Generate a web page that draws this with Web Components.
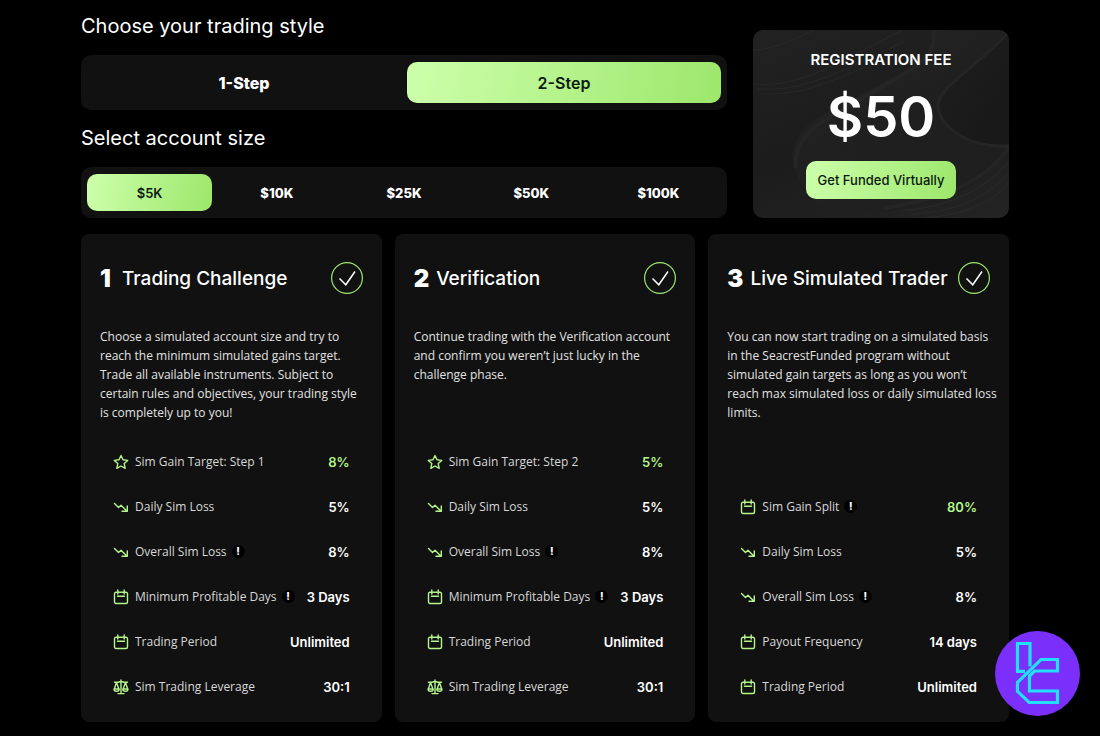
<!DOCTYPE html>
<html lang="en">
<head>
<meta charset="utf-8">
<meta name="viewport" content="width=device-width, initial-scale=1">
<title>Choose your trading style</title>
<style>
  body {
    margin: 0;
    background: #000;
    color: #fff;
    font-family: Inter, "Liberation Sans", sans-serif;
    --text-font: "Open Sans", "Liberation Sans", sans-serif;
    --panel: #111;
    --green: #b4f58c;
    --green-fill: linear-gradient(100deg, #cdffab, #9de76c);
  }
</style>
</head>
<body>
<funding-page></funding-page>

<script>
const ICONS = {
  star: '<path d="M8 1.5 10 5.8 14.700 6.400 11.200 9.600 12.200 14.300 8 12 3.800 14.300 4.800 9.600 1.300 6.400 6 5.800Z"/>',
  loss: '<path d="M1.500 4.500 5.500 8.500 8 6.200 13.800 12M14.300 7V12.300H9"/>',
  calendar: '<path d="M3 3.200H13A1.500 1.500 0 0 1 14.500 4.700V13A1.500 1.500 0 0 1 13 14.500H3A1.500 1.500 0 0 1 1.500 13V4.700A1.500 1.500 0 0 1 3 3.200ZM4.800 1V5M11.200 1V5M4.500 7.300H11.500"/>',
  scales: '<path d="M8 1V14.500M5 14.600H11M1.500 3.200H5L8 2.500 11 3.200H14.500M3.500 3.500 1.300 10M3.500 3.500 5.900 10M12.500 3.500 10.100 10M12.500 3.500 14.700 10M1 10H6.200C6.200 13 1 13 1 10ZM9.800 10H15C15 13 9.800 13 9.800 10Z"/>'
};

class OptionBar extends HTMLElement {
  constructor() {
    super();
    this.shadowDOM = this.attachShadow({mode: 'open'});
  }

  connectedCallback() {
    this.render();
  }

  render() {
    const options = this.getAttribute('options').split(',');
    const active = this.getAttribute('active');
    this.shadowDOM.innerHTML = `
    <style>
    :host {
      display: block;
      --gap: 2px;
      --height: 37px;
      --size: 13px;
    }
    :host([large]) {
      --gap: 6px;
      --height: 41px;
      --size: 16px;
    }
    .bar {
      display: flex;
      gap: var(--gap);
      padding: 7px 6px;
      border-radius: 10px;
      background: var(--panel);
    }
    button {
      flex: 1 1 0;
      height: var(--height);
      padding: 0;
      border: 0;
      border-radius: 10px;
      background: transparent;
      color: #fff;
      font: 800 var(--size) Inter, "Liberation Sans", sans-serif;
      cursor: pointer;
    }
    button[aria-pressed="true"] {
      background: var(--green-fill);
      color: #0b1a10;
      font-weight: 600;
    }
    </style>
    <div class="bar" role="group" aria-label="${this.getAttribute('label')}">
      ${options.map(o => `<button type="button" aria-pressed="${o === active}">${o}</button>`).join('')}
    </div>`;

    this.shadowDOM.querySelectorAll('button').forEach(button => {
      button.addEventListener('click', () => {
        this.setAttribute('active', button.textContent);
        this.render();
      });
    });
  }
}
customElements.define('option-bar', OptionBar);

class FeeCard extends HTMLElement {
  constructor() {
    super();
    this.shadowDOM = this.attachShadow({mode: 'open'});
  }

  connectedCallback() {
    this.shadowDOM.innerHTML = `
    <style>
    :host {
      display: grid;
      overflow: hidden;
      border-radius: 10px;
      background: linear-gradient(160deg, #222, #1c1c1c 50%, #242424);
    }
    .waves, .content {
      grid-area: 1 / 1;
    }
    .waves {
      width: 100%;
      height: 100%;
      min-height: 0;
    }
    .content {
      display: flex;
      flex-direction: column;
      align-items: center;
      padding: 20px 20px 19px;
      z-index: 1;
    }
    h2 {
      margin: 0;
      font-size: 15px;
      line-height: 20px;
      font-weight: 600;
    }
    .price {
      margin: 12px 0 9px;
      font-size: 56px;
      line-height: 70px;
      font-weight: 600;
    }
    button {
      width: 150px;
      height: 38px;
      padding: 0;
      border: 0;
      border-radius: 10px;
      background: var(--green-fill);
      color: #0b1a10;
      font: 500 13px Inter, "Liberation Sans", sans-serif;
      cursor: pointer;
    }
    </style>
    <svg class="waves" viewBox="0 0 256 188" preserveAspectRatio="none" aria-hidden="true">
      <defs>
        <linearGradient id="fold" x1="0" y1="0" x2="1" y2="1">
          <stop offset="0" stop-color="#2a2a2a"/>
          <stop offset="1" stop-color="#1a1a1a"/>
        </linearGradient>
        <linearGradient id="hollow" x1="0" y1="0" x2="1" y2="1">
          <stop offset="0" stop-color="#1d1d1d"/>
          <stop offset="1" stop-color="#141414"/>
        </linearGradient>
      </defs>
      <path d="M40 120C45 92 80 80 120 58S185 30 180 0H256V120C215 180 130 188 75 178C50 165 38 140 40 120Z" fill="url(#fold)" opacity=".5"/>
      <path d="M256 0C230 30 182 58 184 76C188 100 215 118 256 114Z" fill="url(#hollow)" opacity=".6"/>
      <g fill="none" stroke="#2e2e2e">
        <path d="M42 138C42 98 80 86 120 62S185 30 180 0" stroke-width="4" opacity=".4"/>
        <path d="M256 2C225 36 184 58 185 76C188 98 215 118 256 116" stroke-width="3" opacity=".5"/>
        <path d="M256 116C236 150 190 170 130 178" stroke-width="4" opacity=".4"/>
        <path d="M0 54C50 58 80 34 150 0M4 59C54 62 90 40 150 12M8 64C50 66 80 50 110 38M0 20C20 20 50 6 60 0" opacity=".6"/>
        <path d="M150 180C200 178 235 155 256 132M158 184C210 182 240 162 256 142M170 188C220 184 244 168 256 152" opacity=".7"/>
      </g>
    </svg>
    <div class="content">
      <h2><slot name="title"></slot></h2>
      <div class="price"><slot name="price"></slot></div>
      <button type="button"><slot name="action"></slot></button>
    </div>`;
  }
}
customElements.define('fee-card', FeeCard);

class RuleRow extends HTMLElement {
  constructor() {
    super();
    this.shadowDOM = this.attachShadow({mode: 'open'});
  }

  connectedCallback() {
    const info = this.hasAttribute('info')
      ? '<button type="button" aria-label="More information">!</button>' : '';
    this.shadowDOM.innerHTML = `
    <style>
    :host {
      display: flex;
      align-items: center;
      height: 45px;
      white-space: nowrap;
    }
    svg {
      flex: none;
      width: 16px;
      height: 16px;
      margin-right: 6px;
      fill: none;
      stroke: var(--green);
      stroke-width: 1.4;
      stroke-linejoin: round;
      stroke-linecap: round;
    }
    .label {
      color: #d8d8d8;
      font-family: var(--text-font);
      font-size: 12px;
      font-weight: 500;
    }
    .value {
      margin-left: auto;
      font-size: 13px;
      font-weight: 600;
    }
    :host([highlight]) .value {
      color: var(--green);
    }
    button {
      width: 13px;
      height: 13px;
      margin-left: 5px;
      padding: 0;
      border: 0;
      border-radius: 50%;
      background: #000;
      color: #fff;
      font: 800 10px/13px Inter, "Liberation Sans", sans-serif;
    }
    </style>
    <svg viewBox="0 0 16 16" aria-hidden="true">${ICONS[this.getAttribute('icon')]}</svg>
    <span class="label">${this.getAttribute('label')}</span>${info}
    <span class="value"><slot></slot></span>`;
  }
}
customElements.define('rule-row', RuleRow);

class StageCard extends HTMLElement {
  constructor() {
    super();
    this.shadowDOM = this.attachShadow({mode: 'open'});
  }

  connectedCallback() {
    this.shadowDOM.innerHTML = `
    <style>
    :host {
      display: flex;
      flex-direction: column;
      box-sizing: border-box;
      min-width: 0;
      padding: 28px 19px 13px;
      border-radius: 8px;
      background: var(--panel);
    }
    header {
      display: flex;
      align-items: center;
      height: 32px;
      white-space: nowrap;
    }
    .number {
      min-width: 15px;
      margin-right: 7px;
      font-size: 24px;
      font-weight: 900;
    }
    h3 {
      margin: 0;
      font-size: 19px;
      font-weight: 500;
    }
    header svg {
      flex: none;
      width: 32px;
      height: 32px;
      margin-left: auto;
      fill: none;
    }
    p {
      margin: 33px 0 17px;
      color: #e2e2e2;
      font-family: var(--text-font);
      font-size: 12px;
      font-weight: 500;
      line-height: 19px;
    }
    .rules {
      margin-top: auto;
      padding: 0 13px;
    }
    </style>
    <header>
      <span class="number">${this.getAttribute('number')}</span>
      <h3>${this.getAttribute('heading')}</h3>
      <svg viewBox="0 0 32 32" aria-hidden="true">
        <circle cx="16" cy="16" r="15.400" stroke="#9ee86d" stroke-width="1.200"/>
        <path d="M8.500 16.500 14.800 22.800 24 9.500" stroke="#fff" stroke-width="1.500"/>
      </svg>
    </header>
    <p><slot name="about"></slot></p>
    <div class="rules"><slot></slot></div>`;
  }
}
customElements.define('stage-card', StageCard);

class BrandBadge extends HTMLElement {
  constructor() {
    super();
    this.shadowDOM = this.attachShadow({mode: 'open'});
  }

  connectedCallback() {
    this.shadowDOM.innerHTML = `
    <style>
    :host {
      display: block;
      position: fixed;
      right: 20px;
      bottom: 20px;
      width: 85px;
      height: 85px;
    }
    svg {
      display: block;
    }
    </style>
    <svg viewBox="0 0 85 85" role="img" aria-label="Brand logo">
      <circle cx="42.500" cy="42.500" r="42.500" fill="#7b2ffb"/>
      <g fill="none" stroke="#22e0fb" stroke-width="3.200">
        <path d="M30 40.300H22.500V12.500H35V35.500"/>
        <path d="M22.500 51.300 46 28.500H62.500V40H39.500L34.500 45V60H62.500V71.500H34.200L22.500 60.300Z"/>
      </g>
    </svg>`;
  }
}
customElements.define('brand-badge', BrandBadge);

class FundingPage extends HTMLElement {
  constructor() {
    super();
    this.shadowDOM = this.attachShadow({mode: 'open'});
  }

  connectedCallback() {
    this.shadowDOM.innerHTML = `
    <style>
    :host {
      display: block;
      padding: 13px 91px 14px 81px;
    }
    .top {
      display: flex;
      gap: 26px;
      margin-bottom: 16px;
    }
    .choices {
      flex: 1;
    }
    h2 {
      margin: 0 0 16px;
      font-size: 20px;
      line-height: 26px;
      font-weight: 400;
    }
    option-bar + h2 {
      margin-top: 15px;
    }
    fee-card {
      flex: 0 0 256px;
      margin-top: 17px;
    }
    .stages {
      display: grid;
      grid-template-columns: repeat(3, minmax(0, 1fr));
      gap: 13px;
    }
    .keep {
      white-space: nowrap;
    }
    </style>
    <main>
      <section class="top">
        <div class="choices">
          <h2>Choose your trading style</h2>
          <option-bar large label="Trading style" options="1-Step,2-Step" active="2-Step"></option-bar>
          <h2>Select account size</h2>
          <option-bar label="Account size" options="$5K,$10K,$25K,$50K,$100K" active="$5K"></option-bar>
        </div>
        <fee-card>
          <span slot="title">REGISTRATION FEE</span>
          <span slot="price">$50</span>
          <span slot="action">Get Funded Virtually</span>
        </fee-card>
      </section>
      <section class="stages">
        <stage-card number="1" heading="Trading Challenge">
          <span slot="about">Choose a simulated account size and try to reach the minimum simulated gains target. Trade all available instruments. Subject to certain rules and objectives, your trading style is completely up to you!</span>
          <rule-row icon="star" label="Sim Gain Target: Step 1" highlight>8%</rule-row>
          <rule-row icon="loss" label="Daily Sim Loss">5%</rule-row>
          <rule-row icon="loss" label="Overall Sim Loss" info>8%</rule-row>
          <rule-row icon="calendar" label="Minimum Profitable Days" info>3 Days</rule-row>
          <rule-row icon="calendar" label="Trading Period">Unlimited</rule-row>
          <rule-row icon="scales" label="Sim Trading Leverage">30:1</rule-row>
        </stage-card>
        <stage-card number="2" heading="Verification">
          <span slot="about">Continue trading with the Verification account and confirm you weren’t just lucky in the challenge phase.</span>
          <rule-row icon="star" label="Sim Gain Target: Step 2" highlight>5%</rule-row>
          <rule-row icon="loss" label="Daily Sim Loss">5%</rule-row>
          <rule-row icon="loss" label="Overall Sim Loss" info>8%</rule-row>
          <rule-row icon="calendar" label="Minimum Profitable Days" info>3 Days</rule-row>
          <rule-row icon="calendar" label="Trading Period">Unlimited</rule-row>
          <rule-row icon="scales" label="Sim Trading Leverage">30:1</rule-row>
        </stage-card>
        <stage-card number="3" heading="Live Simulated Trader">
          <span slot="about">You can now start trading on a simulated basis in the SeacrestFunded program without simulated gain targets as long as you won’t <span class="keep">reach max simulated loss or daily simulated loss</span> limits.</span>
          <rule-row icon="calendar" label="Sim Gain Split" info highlight>80%</rule-row>
          <rule-row icon="loss" label="Daily Sim Loss">5%</rule-row>
          <rule-row icon="loss" label="Overall Sim Loss" info>8%</rule-row>
          <rule-row icon="calendar" label="Payout Frequency">14 days</rule-row>
          <rule-row icon="calendar" label="Trading Period">Unlimited</rule-row>
        </stage-card>
      </section>
    </main>
    <brand-badge></brand-badge>`;
  }
}
customElements.define('funding-page', FundingPage);
</script>
</body>
</html>
